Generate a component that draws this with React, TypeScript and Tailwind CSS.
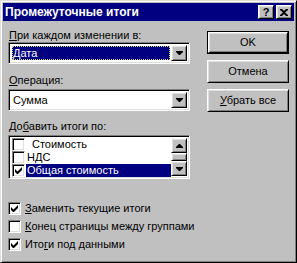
import React from 'react';

// Win98-style 3D edges, built from a 1px border plus an inset shadow for the inner ring.
const RAISED =
  'border border-t-white border-l-white border-r-black border-b-black shadow-[inset_1px_1px_0_#dfdfdf,inset_-1px_-1px_0_#808080]';
const SUNKEN =
  'border border-t-[#808080] border-l-[#808080] border-r-white border-b-white shadow-[inset_1px_1px_0_#000,inset_-1px_-1px_0_#dfdfdf]';

function Check({ checked }: { checked?: boolean }) {
  return (
    <span className={`flex h-[13px] w-[13px] shrink-0 items-center justify-center bg-white ${SUNKEN}`}>
      {checked && (
        <svg width="7" height="7" viewBox="0 0 7 7" aria-hidden="true">
          <path d="M0 2v3l2 2h1l4-4V0L2.5 4.5z" fill="#000" />
        </svg>
      )}
    </span>
  );
}

function Arrow({ up }: { up?: boolean }) {
  return (
    <svg width="7" height="4" viewBox="0 0 7 4" aria-hidden="true">
      <path d={up ? 'M3 0h1l3 3v1H0V3z' : 'M0 0h7v1L4 4H3L0 1z'} fill="#000" />
    </svg>
  );
}

function Combo({ value, focused }: { value: string; focused?: boolean }) {
  return (
    <div className={`flex h-[22px] bg-white p-[2px] ${SUNKEN}`}>
      <div className="flex min-w-0 flex-1 p-px">
        <div
          className={`flex flex-1 items-center pl-px ${
            focused ? 'bg-[#000080] text-white outline-1 outline-dotted outline-[#d8d870] -outline-offset-1' : 'text-black'
          }`}
        >
          {value}
        </div>
      </div>
      <div className={`flex w-[16px] items-center justify-center bg-[#c0c0c0] ${RAISED}`}>
        <Arrow />
      </div>
    </div>
  );
}

function Button({ children, isDefault }: { children: React.ReactNode; isDefault?: boolean }) {
  return (
    <div className={`h-[23px] ${isDefault ? 'border border-black' : ''}`}>
      <div className={`flex h-full items-center justify-center bg-[#c0c0c0] ${RAISED}`}>{children}</div>
    </div>
  );
}

const fields = [
  { label: 'Стоимость', checked: false, indent: true },
  { label: 'НДС', checked: false },
  { label: 'Общая стоимость', checked: true, selected: true },
];

const options = [
  { pre: '', acc: 'З', post: 'аменить текущие итоги', checked: true },
  { pre: '', acc: 'К', post: 'онец страницы между группами', checked: false },
  { pre: 'Ито', acc: 'г', post: 'и под данными', checked: true },
];

export default function App() {
  return (
    <div
      className={`h-[263px] w-[297px] border border-t-[#dfdfdf] border-l-[#dfdfdf] border-r-black border-b-black bg-[#c0c0c0] p-[2px] font-['Liberation_Sans',Arial,sans-serif] text-[11px] leading-[13px] text-black shadow-[inset_1px_1px_0_#fff,inset_-1px_-1px_0_#808080]`}
    >
      {/* Caption bar */}
      <div className="flex h-[18px] items-center bg-[#000080] pl-[2px] pr-[2px]">
        <span className="flex-1 text-[12px] font-bold text-white">Промежуточные итоги</span>
        <div className="flex gap-[2px]">
          <div className={`flex h-[14px] w-[16px] items-center justify-center bg-[#c0c0c0] text-[11px] leading-none font-bold ${RAISED}`}>
            ?
          </div>
          <div className={`flex h-[14px] w-[16px] items-center justify-center bg-[#c0c0c0] ${RAISED}`}>
            <svg width="8" height="7" viewBox="0 0 8 7" aria-hidden="true">
              <path d="M0 0h2l2 2 2-2h2v1L5 3.5 8 6v1H6L4 5 2 7H0V6l3-2.5L0 1z" fill="#000" />
            </svg>
          </div>
        </div>
      </div>

      <div className="flex pl-[5px] pr-[5px]">
        {/* Left column */}
        <div className="flex w-[182px] flex-col">
          <div className="mt-[8px] pl-px">
            <u>П</u>ри каждом изменении в:
          </div>
          <Combo value="Дата" focused />

          <div className="mt-[10px] pl-px">
            <u>О</u>перация:
          </div>
          <div className="mt-[2px]">
            <Combo value="Сумма" />
          </div>

          <div className="mt-[9px] pl-px">
            До<u>б</u>авить итоги по:
          </div>
          <div className={`mt-[2px] flex h-[44px] bg-white p-[2px] ${SUNKEN}`}>
            <div className="flex flex-1 flex-col">
              {fields.map((f) => (
                <div key={f.label} className="flex h-[13px] items-center">
                  <div className="pl-px pr-px">
                    <Check checked={f.checked} />
                  </div>
                  <div className={`flex h-full flex-1 items-center pl-px ${f.selected ? 'bg-[#000080] text-white' : ''}`}>
                    <span className={f.indent ? 'pl-[5px]' : ''}>{f.label}</span>
                  </div>
                </div>
              ))}
            </div>
            <div className="flex w-[16px] flex-col">
              <div className={`flex h-[16px] items-center justify-center bg-[#c0c0c0] ${RAISED}`}>
                <Arrow up />
              </div>
              <div className="flex flex-1 flex-col bg-[repeating-conic-gradient(#fff_0%_25%,#c0c0c0_0%_50%)] bg-[length:2px_2px]">
                <div className="flex-1" />
                <div className={`h-[8px] bg-[#c0c0c0] ${RAISED}`} />
              </div>
              <div className={`flex h-[16px] items-center justify-center bg-[#c0c0c0] ${RAISED}`}>
                <Arrow />
              </div>
            </div>
          </div>
        </div>

        {/* Right column: command buttons */}
        <div className="ml-[17px] mt-[10px] flex w-[82px] flex-col gap-[6px]">
          <Button isDefault>OK</Button>
          <Button>Отмена</Button>
          <Button>
            <span>
              <u>У</u>брать все
            </span>
          </Button>
        </div>
      </div>

      {/* Options */}
      <div className="mt-[23px] flex flex-col gap-[5px] pl-[5px]">
        {options.map((o) => (
          <div key={o.post} className="flex items-center gap-[4px] whitespace-nowrap">
            <Check checked={o.checked} />
            <span>
              {o.pre}
              <u>{o.acc}</u>
              {o.post}
            </span>
          </div>
        ))}
      </div>
    </div>
  );
}
